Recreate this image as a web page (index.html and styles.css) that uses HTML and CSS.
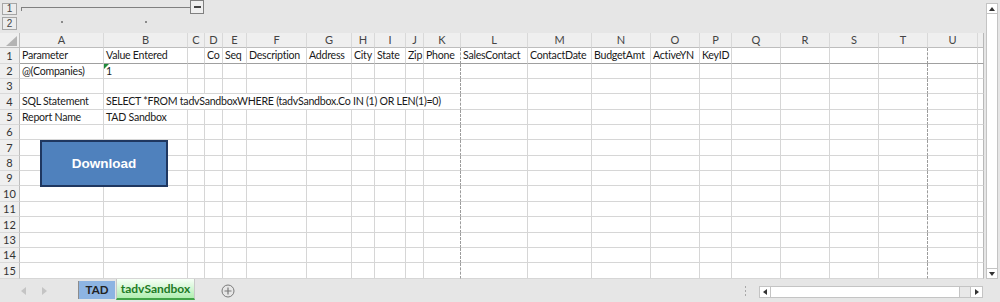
FILE: index.html
```html
<!DOCTYPE html>
<html>
<head>
<meta charset="utf-8">
<link rel="stylesheet" href="styles.css">
</head>
<body>
<div class="app">
  <div class="top">
    <div class="main">
      <div class="outline">
        <div class="levels"><div class="lvl">1</div><div class="lvl">2</div></div>
        <div class="ol-canvas">
          <div class="ol-row1"><div class="ol-bracket"></div><div class="ol-btn"><span class="ol-minus"></span></div></div>
          <div class="ol-row2"><div class="ol-dotcell"><span class="dot"></span></div><div class="ol-dotcell"><span class="dot"></span></div></div>
        </div>
      </div>
      <div class="sheet">
        <div class="row hdr"><div class="corner"><svg width="20" height="15" viewBox="0 0 20 15"><polygon points="17,3 17,13 6,13" fill="#b4b4b4"/></svg></div><div>A</div><div>B</div><div>C</div><div>D</div><div>E</div><div>F</div><div>G</div><div>H</div><div>I</div><div>J</div><div>K</div><div>L</div><div>M</div><div>N</div><div>O</div><div>P</div><div>Q</div><div>R</div><div>S</div><div>T</div><div>U</div><div></div></div>
        <div class="row r16 frz"><div class="rh">1</div><div>Parameter</div><div>Value Entered</div><div></div><div>Co</div><div>Seq</div><div>Description</div><div>Address</div><div>City</div><div>State</div><div>Zip</div><div>Phone</div><div>SalesContact</div><div>ContactDate</div><div>BudgetAmt</div><div>ActiveYN</div><div>KeyID</div><div></div><div></div><div></div><div></div><div></div><div></div></div>
        <div class="row"><div class="rh">2</div><div>@(Companies)</div><div class="txtnum">1</div><div></div><div></div><div></div><div></div><div></div><div></div><div></div><div></div><div></div><div></div><div></div><div></div><div></div><div></div><div></div><div></div><div></div><div></div><div></div><div></div></div>
        <div class="row"><div class="rh">3</div><div></div><div></div><div></div><div></div><div></div><div></div><div></div><div></div><div></div><div></div><div></div><div></div><div></div><div></div><div></div><div></div><div></div><div></div><div></div><div></div><div></div><div></div></div>
        <div class="row r16"><div class="rh">4</div><div>SQL Statement</div><div class="span pb">SELECT *FROM tadvSandboxWHERE (tadvSandbox.Co IN (1) OR LEN(1)=0)</div><div></div><div></div><div></div><div></div><div></div><div></div><div></div><div></div><div></div><div></div><div></div></div>
        <div class="row"><div class="rh">5</div><div>Report Name</div><div>TAD Sandbox</div><div></div><div></div><div></div><div></div><div></div><div></div><div></div><div></div><div></div><div></div><div></div><div></div><div></div><div></div><div></div><div></div><div></div><div></div><div></div><div></div></div>
        <div class="row"><div class="rh">6</div><div></div><div></div><div></div><div></div><div></div><div></div><div></div><div></div><div></div><div></div><div></div><div></div><div></div><div></div><div></div><div></div><div></div><div></div><div></div><div></div><div></div><div></div></div>
        <div class="row r16"><div class="rh">7</div><div></div><div></div><div></div><div></div><div></div><div></div><div></div><div></div><div></div><div></div><div></div><div></div><div></div><div></div><div></div><div></div><div></div><div></div><div></div><div></div><div></div><div></div></div>
        <div class="row"><div class="rh">8</div><div></div><div></div><div></div><div></div><div></div><div></div><div></div><div></div><div></div><div></div><div></div><div></div><div></div><div></div><div></div><div></div><div></div><div></div><div></div><div></div><div></div><div></div></div>
        <div class="row"><div class="rh">9</div><div></div><div></div><div></div><div></div><div></div><div></div><div></div><div></div><div></div><div></div><div></div><div></div><div></div><div></div><div></div><div></div><div></div><div></div><div></div><div></div><div></div><div></div></div>
        <div class="row r16"><div class="rh">10</div><div></div><div></div><div></div><div></div><div></div><div></div><div></div><div></div><div></div><div></div><div></div><div></div><div></div><div></div><div></div><div></div><div></div><div></div><div></div><div></div><div></div><div></div></div>
        <div class="row"><div class="rh">11</div><div></div><div></div><div></div><div></div><div></div><div></div><div></div><div></div><div></div><div></div><div></div><div></div><div></div><div></div><div></div><div></div><div></div><div></div><div></div><div></div><div></div><div></div></div>
        <div class="row r16"><div class="rh">12</div><div></div><div></div><div></div><div></div><div></div><div></div><div></div><div></div><div></div><div></div><div></div><div></div><div></div><div></div><div></div><div></div><div></div><div></div><div></div><div></div><div></div><div></div></div>
        <div class="row"><div class="rh">13</div><div></div><div></div><div></div><div></div><div></div><div></div><div></div><div></div><div></div><div></div><div></div><div></div><div></div><div></div><div></div><div></div><div></div><div></div><div></div><div></div><div></div><div></div></div>
        <div class="row"><div class="rh">14</div><div></div><div></div><div></div><div></div><div></div><div></div><div></div><div></div><div></div><div></div><div></div><div></div><div></div><div></div><div></div><div></div><div></div><div></div><div></div><div></div><div></div><div></div></div>
        <div class="row r16"><div class="rh">15</div><div></div><div></div><div></div><div></div><div></div><div></div><div></div><div></div><div></div><div></div><div></div><div></div><div></div><div></div><div></div><div></div><div></div><div></div><div></div><div></div><div></div><div></div></div>
        <div class="dl-btn">Download</div>
      </div>
    </div>
    <div class="vscroll">
      <div class="vbar">
        <div class="sbtn"><svg width="6" height="4" viewBox="0 0 6 4"><polygon points="3,0 6,4 0,4" fill="#333"/></svg></div>
        <div class="sbtn"><svg width="6" height="4" viewBox="0 0 6 4"><polygon points="0,0 6,0 3,4" fill="#333"/></svg></div>
      </div>
    </div>
  </div>
  <div class="tabbar">
    <div class="nav">
      <svg width="6" height="8" viewBox="0 0 6 8"><polygon points="6,0 6,8 1,4" fill="#c4c4c4"/></svg>
      <svg width="6" height="8" viewBox="0 0 6 8"><polygon points="0,0 0,8 5,4" fill="#c4c4c4"/></svg>
    </div>
    <div class="tabs">
      <div class="tab tab-tad">TAD</div>
      <div class="tab tab-active">tadvSandbox</div>
    </div>
    <div class="addsheet"><svg width="14" height="14" viewBox="0 0 14 14"><circle cx="7" cy="7" r="6" fill="none" stroke="#7a7a7a" stroke-width="1"/><path d="M7 3.5v7M3.5 7h7" stroke="#7a7a7a" stroke-width="1.2"/></svg></div>
    <div class="spacer"></div>
    <div class="grip"><svg width="3" height="11" viewBox="0 0 3 11"><rect x="1" y="0" width="1" height="2" fill="#a8a8a8"/><rect x="1" y="4" width="1" height="2" fill="#a8a8a8"/><rect x="1" y="8" width="1" height="2" fill="#a8a8a8"/></svg></div>
    <div class="hbar">
      <div class="hbtn"><svg width="4" height="6" viewBox="0 0 4 6"><polygon points="4,0 4,6 0,3" fill="#333"/></svg></div>
      <div class="hthumb"></div>
      <div class="htrack"></div>
      <div class="hbtn"><svg width="4" height="6" viewBox="0 0 4 6"><polygon points="0,0 0,6 4,3" fill="#333"/></svg></div>
    </div>
  </div>
</div>
</body>
</html>
```

FILE: styles.css
```css
* { box-sizing: border-box; }
html, body { margin: 0; padding: 0; }
body {
  width: 1000px;
  height: 302px;
  overflow: hidden;
  background: #e6e6e6;
  font-family: "Lato", "Liberation Sans", sans-serif;
  color: #222;
}
.app { display: flex; flex-direction: column; height: 302px; }
.top { display: flex; height: 279px; }
.main { width: 984px; display: flex; flex-direction: column; }

/* outline bar */
.outline { height: 33px; display: flex; }
.levels {
  width: 20px;
  display: flex;
  flex-direction: column;
  gap: 2px;
  padding: 3px 0 0 2px;
}
.lvl {
  width: 15px;
  height: 12px;
  border: 1px solid #a6a6a6;
  background: #ececec;
  font: 10px/10px "Liberation Sans", sans-serif;
  color: #444;
  text-align: center;
}
.lvl + .lvl { height: 13px; line-height: 11px; }
.ol-canvas { flex: 1; display: flex; flex-direction: column; }
.ol-row1 { height: 17px; display: flex; align-items: flex-start; }
.ol-bracket {
  margin: 7px 0 0 1px;
  width: 169px;
  height: 4px;
  border-top: 1px solid #808080;
  border-left: 1px solid #808080;
}
.ol-btn {
  width: 14px;
  height: 14px;
  border: 1px solid #808080;
  background: #efefef;
  display: flex;
  align-items: center;
  justify-content: center;
}
.ol-minus { width: 7px; height: 2px; background: #444; }
.ol-row2 { display: flex; }
.ol-dotcell { width: 84px; display: flex; justify-content: center; padding-top: 4px; }
.dot { width: 2px; height: 2px; background: #8a8a8a; }

/* sheet grid */
.sheet { position: relative; display: flex; flex-direction: column; }
.row {
  display: grid;
  grid-template-columns: 20px 84px 84px 17px 18px 24px 60px 45px 23px 31px 18px 37px 67px 64px 59px 49px 32px 49px 49px 49px 49px 50px 6px;
  height: 15px;
}
.row.r16 { height: 16px; }
.row > div {
  background: #fff;
  border-right: 1px solid #d6d6d6;
  border-bottom: 1px solid #d6d6d6;
  padding: 0 0 0 2px;
  font-size: 10.6px;
  letter-spacing: -0.25px;
  line-height: 14px;
  color: #1a1a1a;
  white-space: nowrap;
  overflow: hidden;
}
.row.r16 > div { line-height: 15px; }
.row > div:last-child { border-right-color: #b8b8b8; }
.row:not(.hdr) > div:nth-child(12),
.row:not(.hdr) > div:nth-child(21),
.row > div.pb { border-right: 1px dashed #9c9c9c; }
.row > div.span { grid-column: span 10; overflow: visible; }
.frz > div:not(.rh) { border-bottom-color: #a0a0a0; }

.row > .rh {
  background: #efefef;
  border-right-color: #bdbdbd;
  border-bottom-color: #d9d9d9;
  color: #333;
  text-align: center;
  padding: 0;
  font-size: 11px;
  letter-spacing: 0;
}
.hdr > div {
  background: #efefef;
  border-right-color: #d9d9d9;
  border-bottom-color: #bdbdbd;
  color: #444;
  text-align: center;
  padding: 0;
  font-size: 11px;
  letter-spacing: 0;
  line-height: 14px;
}
.hdr > .corner { border-right-color: #bdbdbd; line-height: 0; }
.hdr > div:last-child { background: #efefef; }

.txtnum { position: relative; }
.txtnum::before {
  content: "";
  position: absolute;
  left: 0;
  top: 0;
  border-top: 5px solid #1f8a3a;
  border-right: 5px solid transparent;
}

.dl-btn {
  position: absolute;
  left: 40px;
  top: 107px;
  width: 128px;
  height: 47px;
  background: #4f81bd;
  border: 2px solid #1f3760;
  color: #fff;
  font: bold 13.5px "Liberation Sans", sans-serif;
  display: flex;
  align-items: center;
  justify-content: center;
}

/* vertical scrollbar */
.vscroll { width: 16px; padding: 3px 2px 0 2px; }
.vbar {
  width: 12px;
  height: 276px;
  border: 1px solid #c4c4c4;
  background: #fff;
  display: flex;
  flex-direction: column;
  justify-content: space-between;
}
.sbtn {
  height: 10px;
  display: flex;
  align-items: center;
  justify-content: center;
  background: #fff;
}
.sbtn:first-child { border-bottom: 1px solid #c4c4c4; }
.sbtn:last-child { border-top: 1px solid #c4c4c4; }

/* tab bar */
.tabbar {
  height: 23px;
  display: flex;
  align-items: flex-start;
  background: #e6e6e6;
}
.nav {
  width: 78px;
  display: flex;
  gap: 16px;
  padding: 8px 0 0 20px;
}
.tabs {
  display: flex;
  align-items: flex-start;
  border-left: 1px solid #8c8c8c;
  margin-top: 2px;
  height: 18px;
}
.tab { font-size: 12px; text-align: center; }
.tab-tad {
  width: 36px;
  height: 18px;
  line-height: 18px;
  background: #8db4e2;
  color: #222;
  font-weight: bold;
  font-size: 11.5px;
}
.tab-active {
  margin-left: 1px;
  margin-top: -2px;
  width: 79px;
  height: 21px;
  line-height: 19px;
  background: linear-gradient(#f7fff7, #b0eeb0);
  border-left: 1px solid #c8c8c8;
  border-right: 1px solid #c8c8c8;
  border-bottom: 2px solid #41a447;
  color: #1d7b25;
  font-weight: bold;
}
.addsheet { margin: 5px 0 0 26px; line-height: 0; }
.spacer { flex: 1; }
.grip { margin: 7px 12px 0 0; line-height: 0; }
.hbar {
  margin: 7px 17px 0 0;
  width: 224px;
  height: 12px;
  display: flex;
  border: 1px solid #c4c4c4;
  background: #fff;
}
.hbtn {
  width: 11px;
  display: flex;
  align-items: center;
  justify-content: center;
  background: #fff;
}
.hbtn:first-child { border-right: 1px solid #c4c4c4; }
.hbtn:last-child { border-left: 1px solid #c4c4c4; width: 12px; }
.hthumb { flex: 1; background: #fff; border-right: 1px solid #c4c4c4; }
.htrack { width: 10px; background: #e8e8e8; }
```
